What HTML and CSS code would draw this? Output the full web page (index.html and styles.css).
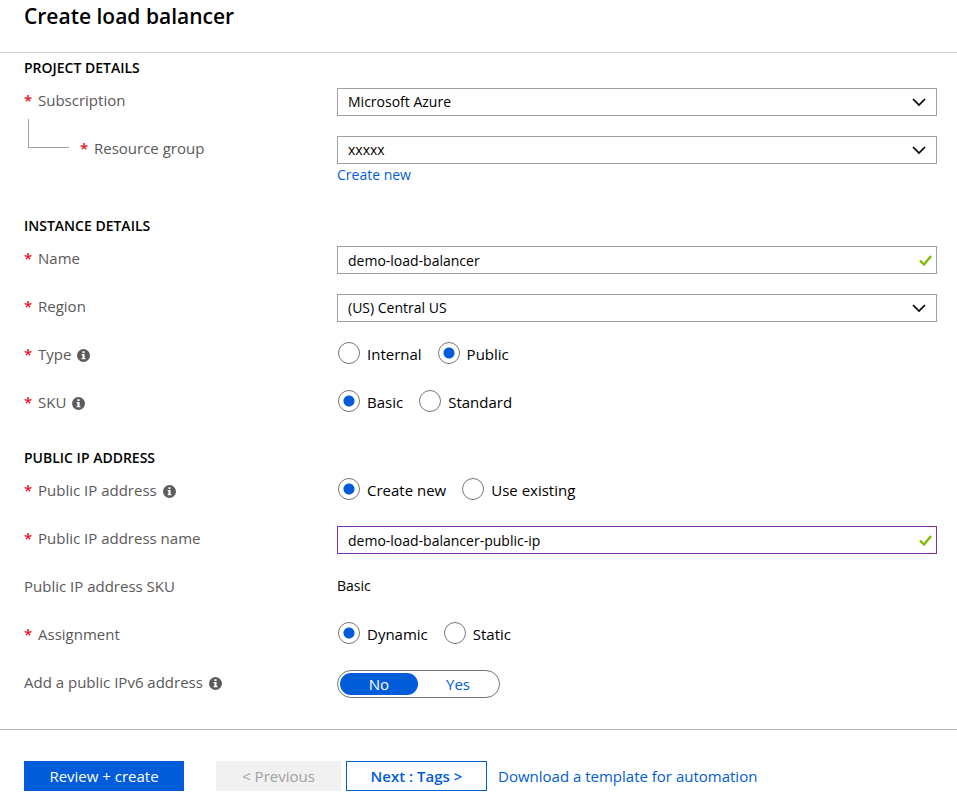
FILE: index.html
```html
<!DOCTYPE html>
<html lang="en">
<head>
<meta charset="utf-8">
<meta name="viewport" content="width=device-width, initial-scale=1">
<title>Create load balancer</title>
<link rel="stylesheet" href="styles.css">
</head>
<body>
<svg class="sprite" aria-hidden="true">
  <symbol id="chevron" viewBox="0 0 14 9"><path d="M1 1l6 6 6-6" fill="none" stroke="currentColor" stroke-width="1.7"/></symbol>
  <symbol id="check" viewBox="0 0 13 11"><path d="M1 5.6l4 3.9L12 1" fill="none" stroke="currentColor" stroke-width="2.3"/></symbol>
  <symbol id="info" viewBox="0 0 12 12"><circle cx="6" cy="6" r="6" fill="currentColor"/><path d="M5 2h2v1.6H5zM4.3 4.7H7v3.7h.8v1.1H4.3V8.4H5V5.8h-.7z" fill="#fff"/></symbol>
</svg>
<header class="page-header"><h1>Create load balancer</h1></header>
<form>
  <main class="form-body">
    <section class="group">
      <h2>PROJECT DETAILS</h2>
      <div class="rows">
        <div class="row">
          <div class="label"><span class="required">*</span><label for="subscription">Subscription</label></div>
          <div class="field"><select id="subscription"><option>Microsoft Azure</option></select><svg class="chevron"><use href="#chevron"/></svg></div>
        </div>
        <div class="row">
          <div class="label"><span class="branch"></span><span class="required">*</span><label for="resource-group">Resource group</label></div>
          <div>
            <div class="field"><select id="resource-group"><option>xxxxx</option></select><svg class="chevron"><use href="#chevron"/></svg></div>
            <a class="field-link" href="#">Create new</a>
          </div>
        </div>
      </div>
    </section>
    <section class="group">
      <h2>INSTANCE DETAILS</h2>
      <div class="rows">
        <div class="row">
          <div class="label"><span class="required">*</span><label for="name">Name</label></div>
          <div class="field"><input class="text" type="text" id="name" value="demo-load-balancer"><svg class="check"><use href="#check"/></svg></div>
        </div>
        <div class="row">
          <div class="label"><span class="required">*</span><label for="region">Region</label></div>
          <div class="field"><select id="region"><option>(US) Central US</option></select><svg class="chevron"><use href="#chevron"/></svg></div>
        </div>
        <div class="row">
          <div class="label"><span class="required">*</span><span id="type-label">Type</span><svg class="info"><use href="#info"/></svg></div>
          <div class="radios" role="radiogroup" aria-labelledby="type-label">
            <label><input type="radio" name="type">Internal</label>
            <label><input type="radio" name="type" checked>Public</label>
          </div>
        </div>
        <div class="row">
          <div class="label"><span class="required">*</span><span id="sku-label">SKU</span><svg class="info"><use href="#info"/></svg></div>
          <div class="radios" role="radiogroup" aria-labelledby="sku-label">
            <label><input type="radio" name="sku" checked>Basic</label>
            <label><input type="radio" name="sku">Standard</label>
          </div>
        </div>
      </div>
    </section>
    <section class="group">
      <h2>PUBLIC IP ADDRESS</h2>
      <div class="rows">
        <div class="row">
          <div class="label"><span class="required">*</span><span id="ip-label">Public IP address</span><svg class="info"><use href="#info"/></svg></div>
          <div class="radios" role="radiogroup" aria-labelledby="ip-label">
            <label><input type="radio" name="ip" checked>Create new</label>
            <label><input type="radio" name="ip">Use existing</label>
          </div>
        </div>
        <div class="row">
          <div class="label"><span class="required">*</span><label for="ip-name">Public IP address name</label></div>
          <div class="field"><input class="text edited" type="text" id="ip-name" value="demo-load-balancer-public-ip"><svg class="check"><use href="#check"/></svg></div>
        </div>
        <div class="row">
          <div class="label">Public IP address SKU</div>
          <div class="value">Basic</div>
        </div>
        <div class="row">
          <div class="label"><span class="required">*</span><span id="assignment-label">Assignment</span></div>
          <div class="radios" role="radiogroup" aria-labelledby="assignment-label">
            <label><input type="radio" name="assignment" checked>Dynamic</label>
            <label><input type="radio" name="assignment">Static</label>
          </div>
        </div>
        <div class="row">
          <div class="label"><span id="ipv6-label">Add a public IPv6 address</span><svg class="info"><use href="#info"/></svg></div>
          <div class="toggle" role="radiogroup" aria-labelledby="ipv6-label">
            <label><input type="radio" name="ipv6" checked>No</label>
            <label><input type="radio" name="ipv6">Yes</label>
          </div>
        </div>
      </div>
    </section>
  </main>
  <footer class="actions">
    <button class="btn primary" type="submit">Review + create</button>
    <button class="btn previous" type="button" disabled>&lt; Previous</button>
    <button class="btn next" type="button">Next : Tags &gt;</button>
    <a href="#">Download a template for automation</a>
  </footer>
</form>
</body>
</html>
```
FILE: styles.css
```css
* { box-sizing: border-box; }
body {
  margin: 0;
  background: #fff;
  color: #000;
  font: 15px/24px "Open Sans", "Noto Sans", sans-serif;
}
.sprite { display: none; }
a { color: #015cda; text-decoration: none; }
h1, h2 { margin: 0; }

.page-header {
  padding: 0 24px 20px;
  border-bottom: 1px solid #d0d0d0;
}
h1 { font-size: 21px; line-height: 32px; font-weight: 600; }

.form-body {
  display: grid;
  gap: 30px;
  padding: 5px 20px 31px 24px;
}
h2 {
  margin-bottom: 10px;
  font-size: 14px;
  line-height: 20px;
  font-weight: 600;
}
.rows { display: grid; gap: 20px; }
.row {
  display: grid;
  grid-template-columns: 313px 1fr;
  align-items: start;
  min-height: 28px;
}
.label { display: flex; color: #595959; }
.required { width: 14px; flex: none; color: #e81123; font-weight: 600; }
.branch {
  width: 41px;
  height: 29px;
  margin: -17px 11px 0 4px;
  border: solid #a0a0a0;
  border-width: 0 0 1px 1px;
}
.info {
  width: 13px;
  height: 13px;
  margin: 7px 0 0 6px;
  color: #5c5c5c;
}

.field { position: relative; }
select, .text {
  display: block;
  width: 100%;
  height: 28px;
  margin: 0;
  padding: 0 32px 0 10px;
  border: 1px solid #a0a0a0;
  border-radius: 0;
  background: #fff;
  color: #000;
  font: 14px/20px "Open Sans", "Noto Sans", sans-serif;
  appearance: none;
}
.text.edited { border-color: #882fa0; }
.chevron {
  position: absolute;
  top: 10px;
  right: 11px;
  width: 14px;
  height: 9px;
  pointer-events: none;
}
.check {
  position: absolute;
  top: 9px;
  right: 5px;
  width: 13px;
  height: 11px;
  color: #7fba00;
  pointer-events: none;
}
.field-link { display: block; width: max-content; font-size: 14px; line-height: 22px; }
.value { font-size: 14px; }

.radios { display: flex; gap: 16px; padding-left: 1px; }
.radios label { display: flex; gap: 7px; }
.radios input {
  width: 22px;
  height: 22px;
  margin: 0;
  border: 1px solid #767676;
  border-radius: 50%;
  appearance: none;
}
.radios input:checked { background: radial-gradient(circle, #015cda 5px, transparent 6px); }

.toggle {
  display: grid;
  grid-template-columns: 78px 78px;
  gap: 1px;
  width: max-content;
  height: 28px;
  padding: 2px;
  border: 1px solid #767676;
  border-radius: 14px;
}
.toggle label {
  border-radius: 11px;
  color: #015cda;
  line-height: 22px;
  text-align: center;
}
.toggle input { position: absolute; margin: 0; opacity: 0; }
.toggle label:has(:checked) { background: #015cda; color: #fff; }

.actions {
  display: flex;
  align-items: center;
  padding: 31px 24px 15px;
  border-top: 1px solid #b4b4b4;
}
.btn {
  height: 30px;
  padding: 0 20px;
  border: 1px solid #015cda;
  background: #fff;
  color: #015cda;
  font: 400 15px/24px "Open Sans", "Noto Sans", sans-serif;
}
.primary { min-width: 160px; margin-right: 32px; background: #015cda; color: #fff; }
.previous { min-width: 125px; margin-right: 5px; border-color: #f1f1f1; background: #f1f1f1; color: #a0a0a0; }
.next { min-width: 141px; margin-right: 11px; font-weight: 600; }
```
